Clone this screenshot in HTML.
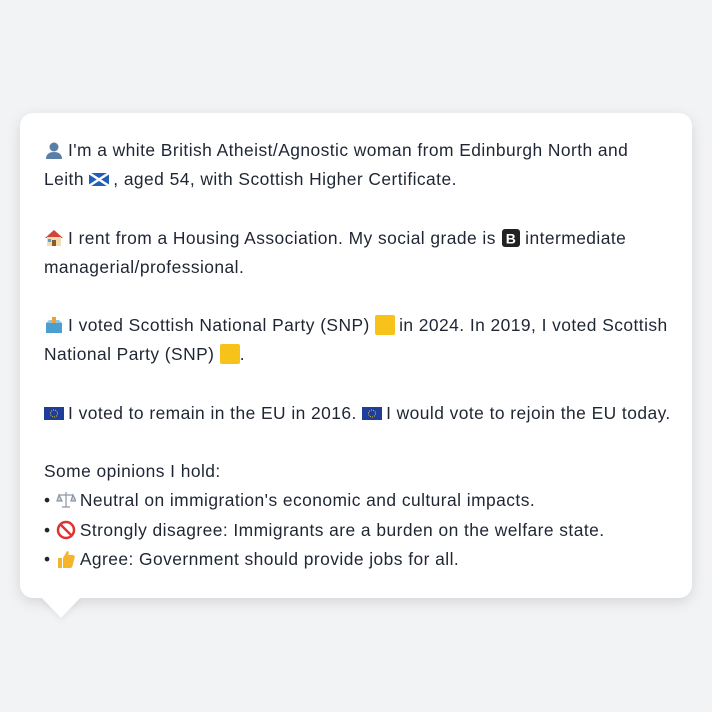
<!DOCTYPE html>
<html><head><meta charset="utf-8"><style>
html,body{margin:0;padding:0;background:#f2f3f5;width:712px;height:712px;overflow:hidden}
.card{position:absolute;left:20px;top:113px;width:672px;height:485px;background:#fff;border-radius:13px;box-shadow:0 4px 14px rgba(0,0,0,.12)}
.tail{position:absolute;left:41px;top:597px;width:0;height:0;border-left:20px solid transparent;border-right:20px solid transparent;border-top:21px solid #fff;filter:drop-shadow(0 3px 3px rgba(0,0,0,.06))}
.txt{position:absolute;left:44px;top:136px;font-family:"Liberation Sans",sans-serif;font-size:17.4px;letter-spacing:0.45px;line-height:29.2px;color:#1f2633;white-space:nowrap}
svg.e{width:20px;height:20px;vertical-align:-4px;margin-right:4px}
</style></head><body>
<div class="card"></div>
<div class="tail"></div>
<div class="txt">
<svg class="e" viewBox="0 0 20 20"><circle cx="10" cy="7" r="4.5" fill="#5a7fa6"/><path d="M2 19c0-5 3.5-7 8-7s8 2 8 7z" fill="#5a7fa6"/></svg>I'm a white British Atheist/Agnostic woman from Edinburgh North and<br>
Leith <svg class="e" viewBox="0 0 20 20"><rect x="0" y="4" width="20" height="13" fill="#1f5fb8"/><path d="M0 4L20 17M20 4L0 17" stroke="#fff" stroke-width="2.5"/></svg>, aged 54, with Scottish Higher Certificate.<br><br>
<svg class="e" viewBox="0 0 20 20"><path d="M1 10L10 2l9 8z" fill="#d0463b"/><rect x="3" y="9" width="14" height="9" fill="#f3dcb0"/><rect x="8" y="12" width="4" height="6" fill="#8b5a2b"/><rect x="4" y="11" width="3" height="3" fill="#5aa0d8"/></svg>I rent from a Housing Association. My social grade is <svg class="e" viewBox="0 0 20 20"><rect x="1" y="1" width="18" height="18" rx="3" fill="#222"/><text x="10" y="15.5" font-family="Liberation Sans" font-size="14" font-weight="bold" fill="#fff" text-anchor="middle">B</text></svg>intermediate<br>
managerial/professional.<br><br>
<svg class="e" viewBox="0 0 20 20"><rect x="2" y="8" width="16" height="10" fill="#4a9fd0"/><path d="M2 8l3-3h10l3 3z" fill="#8cc8ea"/><rect x="8" y="2" width="4" height="6" fill="#f0a030"/></svg>I voted Scottish National Party (SNP) <svg class="e" viewBox="0 0 20 20"><rect x="0" y="0" width="20" height="20" rx="2" fill="#f7c21a"/></svg>in 2024. In 2019, I voted Scottish<br>
National Party (SNP) <svg class="e" viewBox="0 0 20 20" style="margin-right:0"><rect x="0" y="0" width="20" height="20" rx="2" fill="#f7c21a"/></svg>.<br><br>
<svg class="e" viewBox="0 0 20 20"><rect x="0" y="4" width="20" height="13" fill="#1f3d99"/><circle cx="10" cy="10.5" r="3.5" fill="none" stroke="#f2cc2a" stroke-width="1" stroke-dasharray="1 1.2"/></svg>I voted to remain in the EU in 2016. <svg class="e" viewBox="0 0 20 20"><rect x="0" y="4" width="20" height="13" fill="#1f3d99"/><circle cx="10" cy="10.5" r="3.5" fill="none" stroke="#f2cc2a" stroke-width="1" stroke-dasharray="1 1.2"/></svg>I would vote to rejoin the EU today.<br><br>
Some opinions I hold:<br>
• <svg class="e" viewBox="0 0 20 20"><path d="M10 2v15M3 5h14M6 17h8M3 5l-2 6h5zM17 5l-2 6h5z" stroke="#8a96a3" stroke-width="1.2" fill="#cfd6dd"/></svg>Neutral on immigration's economic and cultural impacts.<br>
• <svg class="e" viewBox="0 0 20 20"><circle cx="10" cy="10" r="8" fill="none" stroke="#e0332f" stroke-width="2.5"/><path d="M4.5 4.5l11 11" stroke="#e0332f" stroke-width="2.5"/></svg>Strongly disagree: Immigrants are a burden on the welfare state.<br>
• <svg class="e" viewBox="0 0 20 20"><path d="M2 9h4v10H2zM7 9l4-7c2 0 2 2 1.5 4H17c1.5 0 2 1.5 1.5 3l-2 8c-.3 1-1 2-2 2H7z" fill="#f5b52a"/></svg>Agree: Government should provide jobs for all.
</div>
</body></html>
